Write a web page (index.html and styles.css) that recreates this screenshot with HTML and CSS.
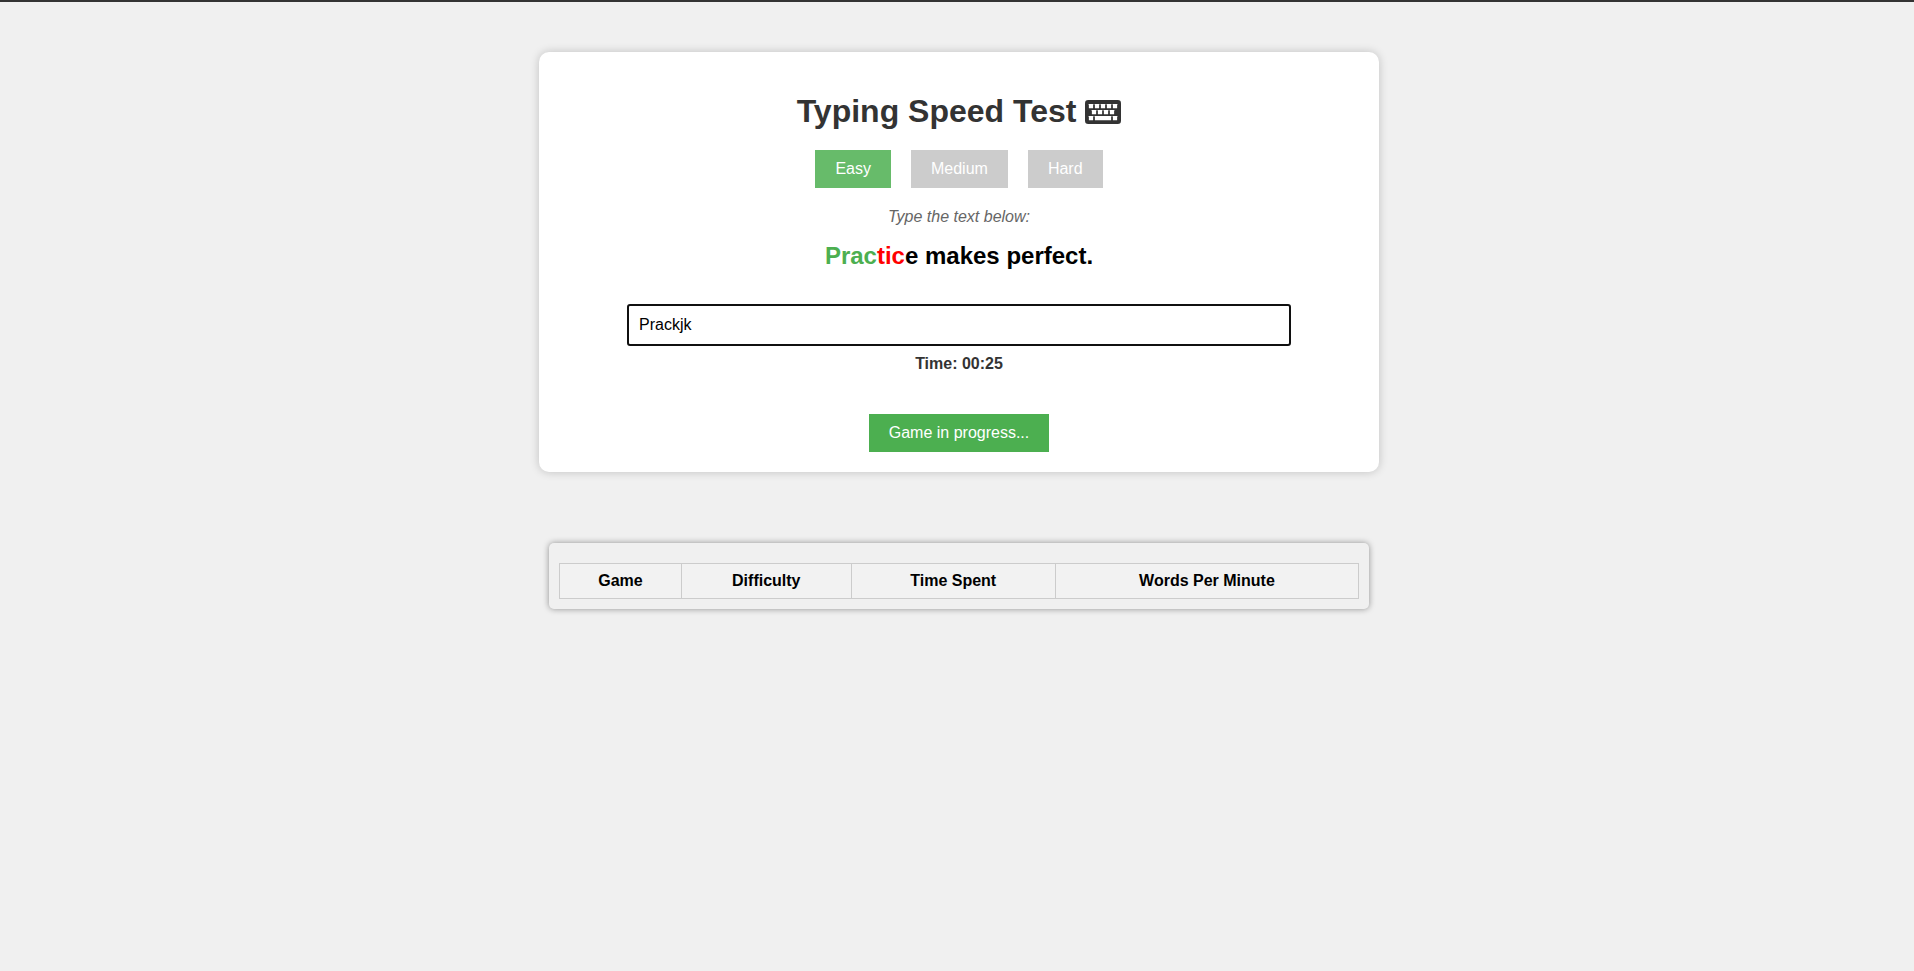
FILE: index.html
```
<!DOCTYPE html>
<html lang="en">
<head>
<meta charset="utf-8">
<title>Typing Speed Test</title>
<link rel="stylesheet" href="styles.css">
</head>
<body>
<main class="page">
  <section class="card">
    <h1 class="title">Typing Speed Test
      <svg class="title-icon" viewBox="0 0 576 512" aria-hidden="true">
        <rect class="board" x="0" y="64" width="576" height="384" rx="52"/>
        <g class="keys">
          <rect x="62" y="126" width="68" height="68" rx="4"/>
          <rect x="158" y="126" width="68" height="68" rx="4"/>
          <rect x="254" y="126" width="68" height="68" rx="4"/>
          <rect x="350" y="126" width="68" height="68" rx="4"/>
          <rect x="446" y="126" width="68" height="68" rx="4"/>
          <rect x="110" y="222" width="68" height="68" rx="4"/>
          <rect x="206" y="222" width="68" height="68" rx="4"/>
          <rect x="302" y="222" width="68" height="68" rx="4"/>
          <rect x="398" y="222" width="68" height="68" rx="4"/>
          <rect x="62" y="318" width="68" height="68" rx="4"/>
          <rect x="158" y="318" width="260" height="68" rx="4"/>
          <rect x="446" y="318" width="68" height="68" rx="4"/>
        </g>
      </svg></h1>
    <div class="levels">
      <button type="button" class="btn btn-active">Easy</button>
      <button type="button" class="btn btn-muted">Medium</button>
      <button type="button" class="btn btn-muted">Hard</button>
    </div>
    <label class="hint" for="typed">Type the text below:</label>
    <p class="sentence"><span class="right">Prac</span><span class="wrong">tic</span>e makes perfect.</p>
    <input class="typed" id="typed" type="text" value="Prackjk" autocomplete="off" spellcheck="false">
    <p class="timer">Time: 00:25</p>
    <button type="button" class="btn btn-start">Game in progress...</button>
  </section>
  <section class="results">
    <table class="scores">
      <thead>
        <tr><th scope="col">Game</th><th scope="col">Difficulty</th><th scope="col">Time Spent</th><th scope="col">Words Per Minute</th></tr>
      </thead>
    </table>
  </section>
</main>
</body>
</html>
```
FILE: styles.css
```
body {
  margin: 0;
  background: #f0f0f0;
  border-top: 2px solid #333;
  font-family: "Liberation Sans", Arial, sans-serif;
  font-size: 16px;
  line-height: 18px;
  color: #000;
}

.page {
  display: flex;
  flex-direction: column;
  align-items: center;
  padding: 50px 0 50px 4px;
}

.card {
  box-sizing: border-box;
  width: 100%;
  max-width: 840px;
  padding: 20px;
  display: flex;
  flex-direction: column;
  align-items: center;
  background: #fff;
  border-radius: 10px;
  box-shadow: 0 0 10px rgba(0, 0, 0, 0.2);
}

.title {
  margin: 21px 0 20px;
  font-size: 32px;
  line-height: 37px;
  color: #333;
}

.title-icon {
  width: 36px;
  height: 32px;
  vertical-align: -6px;
}

.board { fill: #333; }
.keys { fill: #fff; }

.levels {
  display: flex;
  gap: 20px;
  margin-bottom: 20px;
}

.btn {
  padding: 10px 20px;
  border: 0;
  font: inherit;
  color: #fff;
  cursor: pointer;
}

.btn-active { background: #67bb6a; }
.btn-muted { background: #ccc; }
.btn-start { background: #4caf50; }

.hint {
  margin-bottom: 16px;
  font-style: italic;
  color: #666;
}

.sentence {
  margin: 0 0 35px;
  font-size: 24px;
  line-height: 27px;
  font-weight: bold;
}

.right { color: #4caf50; }
.wrong { color: #f00; }

.typed {
  width: 80%;
  height: 18px;
  padding: 10px;
  border: 2px solid #101010;
  border-radius: 3px;
  outline: 0;
  background: #fff;
  font: inherit;
  color: #000;
}

.timer {
  margin: 9px 0 41px;
  font-weight: bold;
  color: #333;
}

.results {
  box-sizing: border-box;
  width: 100%;
  max-width: 820px;
  margin-top: 71px;
  padding: 20px 10px 10px;
  border-radius: 5px;
  box-shadow: 0 0 6px rgba(0, 0, 0, 0.4);
}

.scores {
  width: 100%;
  border-collapse: collapse;
}

.scores th {
  padding: 8px;
  border: 1px solid #ccc;
  background: #f2f2f2;
  text-align: center;
}
```
